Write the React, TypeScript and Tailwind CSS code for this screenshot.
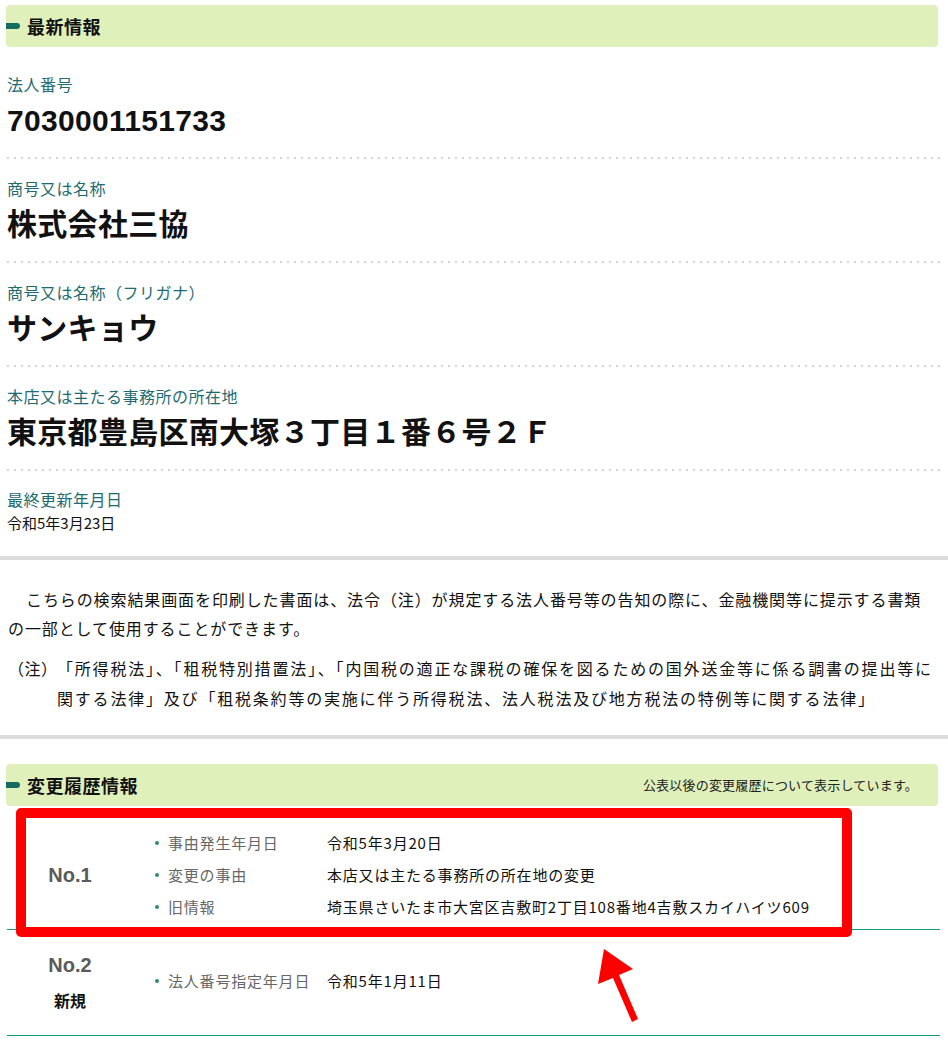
import React from 'react';

const fields = [
  { label: '法人番号', value: '7030001151733' },
  { label: '商号又は名称', value: '株式会社三協' },
  { label: '商号又は名称（フリガナ）', value: 'サンキョウ' },
  { label: '本店又は主たる事務所の所在地', value: '東京都豊島区南大塚３丁目１番６号２Ｆ' },
];

const history = [
  {
    no: 'No.1',
    sub: '',
    items: [
      ['事由発生年月日', '令和5年3月20日'],
      ['変更の事由', '本店又は主たる事務所の所在地の変更'],
      ['旧情報', '埼玉県さいたま市大宮区吉敷町2丁目108番地4吉敷スカイハイツ609'],
    ],
  },
  {
    no: 'No.2',
    sub: '新規',
    items: [['法人番号指定年月日', '令和5年1月11日']],
  },
];

function SectionHeader({ title, note }: { title: string; note?: string }) {
  return (
    <div className="ml-[6px] mr-[10px] h-[42px] rounded-[4px] bg-[#dff0bb] flex items-center">
      <div className="w-[14px] h-[6px] rounded-r-full bg-[#156b5f]" />
      <div className="ml-[7px] text-[18px] font-bold text-[#111] tracking-[0.5px]">{title}</div>
      {note && (
        <div className="ml-auto mr-[20px] text-[13px] text-[#222] tracking-[0.2px]">{note}</div>
      )}
    </div>
  );
}

function Dots() {
  return (
    <div className="h-[2px] bg-[linear-gradient(to_right,#d4d4d4_2px,transparent_2px)] bg-[length:7px_2px] bg-repeat-x" />
  );
}

export default function App() {
  return (
    <div className="relative w-[948px] min-h-[1046px] bg-white pt-[5px] text-[#111] font-['Noto_Sans_CJK_JP','Noto_Sans',sans-serif]">
      <SectionHeader title="最新情報" />

      <div className="mt-[8px] ml-[7px] mr-[8px]">
        {fields.map((f) => (
          <div key={f.label}>
            <div className="pt-[18px] pb-[17px]">
              <div className="h-[22px] text-[16px] leading-[22px] text-[#1e6b73] tracking-[0.5px]">{f.label}</div>
              <div className="mt-[7px] h-[38px] text-[30px] leading-[38px] font-bold font-['Liberation_Sans','Noto_Sans_CJK_JP',sans-serif] tracking-[0.3px]">
                {f.value}
              </div>
            </div>
            <Dots />
          </div>
        ))}
        <div className="pt-[17px] pb-[21px]">
          <div className="h-[22px] text-[16px] leading-[22px] text-[#1e6b73] tracking-[0.5px]">最終更新年月日</div>
          <div className="mt-[1px] h-[24px] text-[15px] leading-[24px]">令和5年3月23日</div>
        </div>
      </div>

      <div className="h-[4px] bg-[#dcdcdc]" />

      <div className="px-[8px] pt-[25px] pb-[22px] text-[16px]">
        <p className="leading-[29px] indent-[18px] tracking-[0.9px]">
          こちらの検索結果画面を印刷した書面は、法令（注）が規定する法人番号等の告知の際に、金融機関等に提示する書類
          <br />
          の一部として使用することができます。
        </p>
        <div className="mt-[10px] flex leading-[30px]">
          <div className="w-[49px] shrink-0 tracking-[0.5px]">（注）</div>
          <div className="tracking-[1.8px]">
            「所得税法」、「租税特別措置法」、「内国税の適正な課税の確保を図るための国外送金等に係る調書の提出等に
            <br />
            関する法律」及び「租税条約等の実施に伴う所得税法、法人税法及び地方税法の特例等に関する法律」
          </div>
        </div>
      </div>

      <div className="h-[4px] bg-[#dcdcdc]" />

      <div className="mt-[25px]">
        <SectionHeader title="変更履歴情報" note="公表以後の変更履歴について表示しています。" />
        <div className="ml-[7px] mr-[8px]">
          {history.map((h, i) => (
            <div key={h.no}>
              <div className={`flex items-center ${i === 0 ? 'pt-[21px] pb-[6px]' : 'pt-[21px] pb-[24px]'}`}>
                <div className="w-[126px] shrink-0 flex flex-col items-center">
                  <div className="h-[28px] leading-[28px] text-[20px] font-bold text-[#5a5a5a] font-['Liberation_Sans',sans-serif]">
                    {h.no}
                  </div>
                  {h.sub && <div className="mt-[10px] h-[22px] leading-[22px] text-[16px] font-bold text-[#111]">{h.sub}</div>}
                </div>
                <div className="ml-[22px] flex flex-col">
                  {h.items.map(([k, v]) => (
                    <div key={k} className="h-[32px] flex items-center text-[15px] tracking-[0.8px]">
                      <div className="w-[13px] shrink-0">
                        <div className="w-[4px] h-[4px] rounded-full bg-[#2c8c6c]" />
                      </div>
                      <div className="w-[159px] shrink-0 text-[#666]">{k}</div>
                      <div className="text-[#111]">{v}</div>
                    </div>
                  ))}
                </div>
              </div>
              <div className="h-[1px] bg-[#129a84]" />
            </div>
          ))}
        </div>
      </div>

      {/* annotation overlay */}
      <div className="absolute left-[16px] top-[808px] w-[836px] h-[129px] border-[10px] border-[#ff0000] rounded-[5px]" />
      <svg className="absolute left-[590px] top-[940px]" width="60" height="90" viewBox="590 940 60 90">
        <polygon
          points="604,949 633,969 619,975 638,1019 632,1022 613,978 598,984"
          fill="#ff0000"
        />
      </svg>
    </div>
  );
}
